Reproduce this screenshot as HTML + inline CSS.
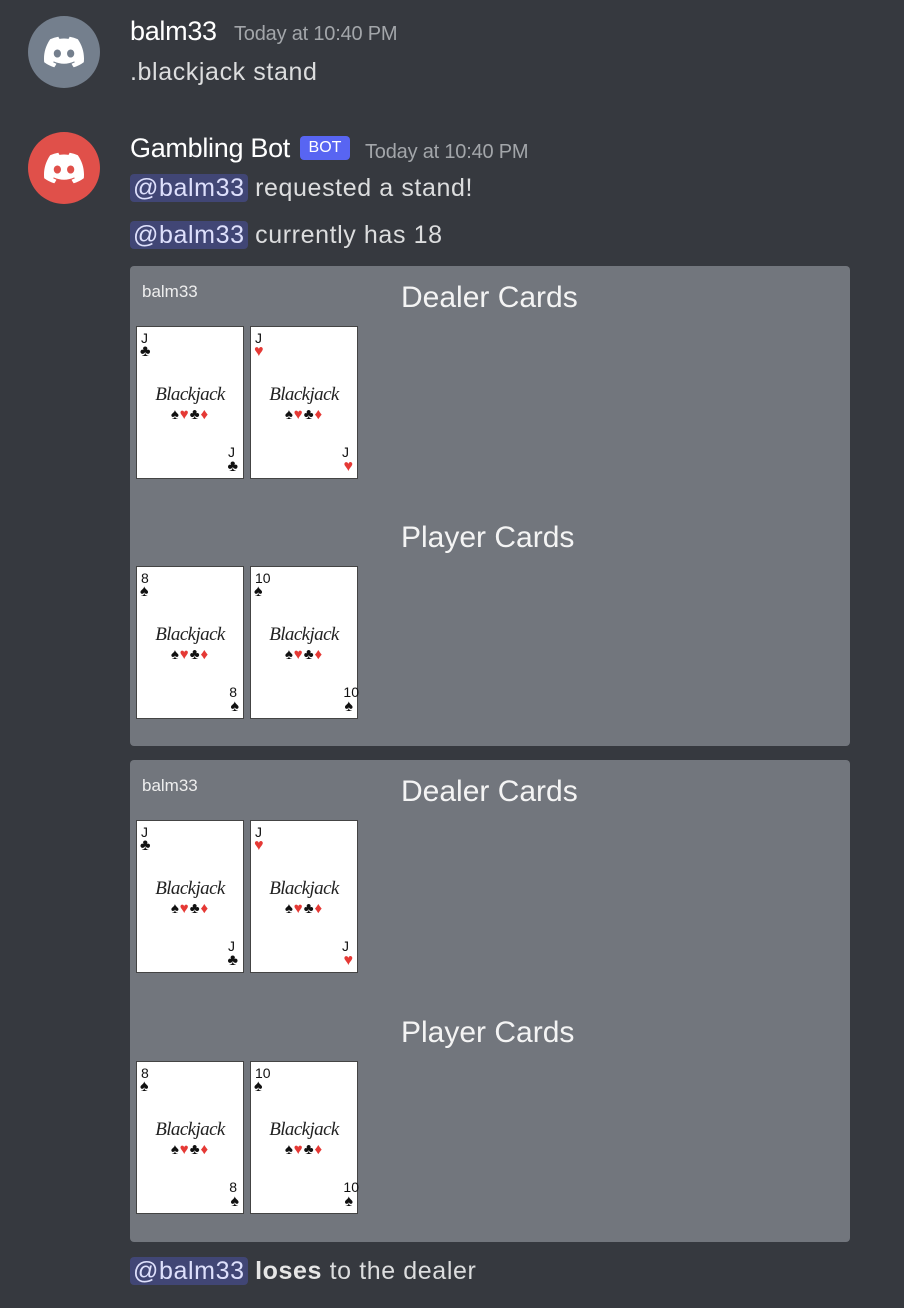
<!DOCTYPE html>
<html><head><meta charset="utf-8"><style>
*{margin:0;padding:0;box-sizing:border-box}
body{width:904px;height:1308px;background:#36393f;font-family:"Liberation Sans",sans-serif;position:relative;overflow:hidden;color:#dcddde}
.a{position:absolute}
.av{position:absolute;left:28px;width:72px;height:72px;border-radius:50%;display:flex;align-items:center;justify-content:center}
.name{font-size:27px;color:#fff;letter-spacing:-0.3px}
.ts{font-size:20px;color:#a3a6aa;letter-spacing:-0.2px}
.txt{font-size:25px;color:#dcddde;letter-spacing:0.6px}
.m{background:#414675;color:#dee0fc;border-radius:4px;padding:0 3px}
.emb{position:absolute;left:130px;width:720px;background:#72767d;border-radius:4px}
.card{position:absolute;width:108px;height:153px;background:#fff;border:1px solid #444}
.card .r{position:absolute;font-size:14px;color:#111;line-height:14px}
.card .s{position:absolute;font-size:16px;line-height:16px}
.bj{position:absolute;left:0;width:106px;top:57px;text-align:center;font-family:"Liberation Serif",serif;font-style:italic;font-size:19px;color:#222;letter-spacing:-0.6px}
.suits{position:absolute;left:0;width:106px;top:79px;text-align:center;font-size:15px;letter-spacing:1px}
.red{color:#e53935}.blk{color:#111}
.h{position:absolute;left:271px;font-size:30px;color:#f4f4f4}
.u{position:absolute;left:12px;top:16px;font-size:17px;color:#eee}
</style></head><body>

<div class="av" style="top:16px;background:#747f8d"><svg width="40" height="40" viewBox="0 0 24 24"><path fill="#fff" d="M20.317 4.37a19.791 19.791 0 0 0-4.885-1.515.074.074 0 0 0-.079.037c-.21.375-.444.864-.608 1.25a18.27 18.27 0 0 0-5.487 0 12.64 12.64 0 0 0-.617-1.25.077.077 0 0 0-.079-.037A19.736 19.736 0 0 0 3.677 4.37a.07.07 0 0 0-.032.027C.533 9.046-.32 13.58.099 18.057a.082.082 0 0 0 .031.057 19.9 19.9 0 0 0 5.993 3.03.078.078 0 0 0 .084-.028c.462-.63.874-1.295 1.226-1.994a.076.076 0 0 0-.041-.106 13.107 13.107 0 0 1-1.872-.892.077.077 0 0 1-.008-.128 10.2 10.2 0 0 0 .372-.292.074.074 0 0 1 .077-.01c3.928 1.793 8.18 1.793 12.062 0a.074.074 0 0 1 .078.01c.12.098.246.198.373.292a.077.077 0 0 1-.006.127 12.299 12.299 0 0 1-1.873.892.077.077 0 0 0-.041.107c.36.698.772 1.362 1.225 1.993a.076.076 0 0 0 .084.028 19.839 19.839 0 0 0 6.002-3.030.077.077 0 0 0 .032-.054c.5-5.177-.838-9.674-3.549-13.66a.061.061 0 0 0-.031-.03zM8.02 15.33c-1.183 0-2.157-1.085-2.157-2.419 0-1.333.956-2.419 2.157-2.419 1.21 0 2.176 1.096 2.157 2.42 0 1.333-.956 2.418-2.157 2.418zm7.975 0c-1.183 0-2.157-1.085-2.157-2.419 0-1.333.955-2.419 2.157-2.419 1.21 0 2.176 1.096 2.157 2.42 0 1.333-.946 2.418-2.157 2.418z"/></svg></div>
<div class="a name" style="left:130px;top:16px">balm33</div>
<div class="a ts" style="left:234px;top:23px">Today at 10:40 PM</div>
<div class="a txt" style="left:130px;top:58px">.blackjack stand</div>

<div class="av" style="top:132px;background:#e0504a"><svg width="40" height="40" viewBox="0 0 24 24"><path fill="#fff" d="M20.317 4.37a19.791 19.791 0 0 0-4.885-1.515.074.074 0 0 0-.079.037c-.21.375-.444.864-.608 1.25a18.27 18.27 0 0 0-5.487 0 12.64 12.64 0 0 0-.617-1.25.077.077 0 0 0-.079-.037A19.736 19.736 0 0 0 3.677 4.37a.07.07 0 0 0-.032.027C.533 9.046-.32 13.58.099 18.057a.082.082 0 0 0 .031.057 19.9 19.9 0 0 0 5.993 3.03.078.078 0 0 0 .084-.028c.462-.63.874-1.295 1.226-1.994a.076.076 0 0 0-.041-.106 13.107 13.107 0 0 1-1.872-.892.077.077 0 0 1-.008-.128 10.2 10.2 0 0 0 .372-.292.074.074 0 0 1 .077-.01c3.928 1.793 8.180 1.793 12.062 0a.074.074 0 0 1 .078.01c.12.098.246.198.373.292a.077.077 0 0 1-.006.127 12.299 12.299 0 0 1-1.873.892.077.077 0 0 0-.041.107c.36.698.772 1.362 1.225 1.993a.076.076 0 0 0 .084.028 19.839 19.839 0 0 0 6.002-3.03.077.077 0 0 0 .032-.054c.5-5.177-.838-9.674-3.549-13.66a.061.061 0 0 0-.031-.03zM8.02 15.33c-1.183 0-2.157-1.085-2.157-2.419 0-1.333.956-2.419 2.157-2.419 1.21 0 2.176 1.096 2.157 2.42 0 1.333-.956 2.418-2.157 2.418zm7.975 0c-1.183 0-2.157-1.085-2.157-2.419 0-1.333.955-2.419 2.157-2.419 1.21 0 2.176 1.096 2.157 2.42 0 1.333-.946 2.418-2.157 2.418z"/></svg></div>
<div class="a name" style="left:130px;top:133px">Gambling Bot</div>
<div class="a" style="left:300px;top:136px;width:50px;height:24px;background:#5865f2;border-radius:4px;color:#fff;font-size:16px;text-align:center;line-height:24px">BOT</div>
<div class="a ts" style="left:365px;top:141px">Today at 10:40 PM</div>
<div class="a txt" style="left:130px;top:174px"><span class="m">@balm33</span> requested a stand!</div>
<div class="a txt" style="left:130px;top:221px"><span class="m">@balm33</span> currently has 18</div>

<div class="emb" style="top:266px;height:480px">
<div class="u">balm33</div>
<div class="h" style="top:15px">Dealer Cards</div>
<div class="h" style="top:255px">Player Cards</div>
<div class="card" style="left:6px;top:60px"><div class="r" style="left:4px;top:4px">J</div><div class="s blk" style="left:3px;top:17px">♣</div><div class="bj">Blackjack</div><div class="suits"><span class="blk">♠</span><span class="red">♥</span><span class="blk">♣</span><span class="red">♦</span></div><div class="r" style="right:8px;top:118px">J</div><div class="s blk" style="right:5px;top:132px">♣</div></div>
<div class="card" style="left:120px;top:60px"><div class="r red" style="left:4px;top:4px">J</div><div class="s red" style="left:3px;top:17px">♥</div><div class="bj">Blackjack</div><div class="suits"><span class="blk">♠</span><span class="red">♥</span><span class="blk">♣</span><span class="red">♦</span></div><div class="r red" style="right:8px;top:118px">J</div><div class="s red" style="right:4px;top:132px">♥</div></div>
<div class="card" style="left:6px;top:300px"><div class="r" style="left:4px;top:4px">8</div><div class="s blk" style="left:3px;top:17px">♠</div><div class="bj">Blackjack</div><div class="suits"><span class="blk">♠</span><span class="red">♥</span><span class="blk">♣</span><span class="red">♦</span></div><div class="r" style="right:6px;top:118px">8</div><div class="s blk" style="right:4px;top:132px">♠</div></div>
<div class="card" style="left:120px;top:300px"><div class="r" style="left:4px;top:4px">10</div><div class="s blk" style="left:3px;top:17px">♠</div><div class="bj">Blackjack</div><div class="suits"><span class="blk">♠</span><span class="red">♥</span><span class="blk">♣</span><span class="red">♦</span></div><div class="r" style="right:-2px;top:118px">10</div><div class="s blk" style="right:4px;top:132px">♠</div></div>
</div>

<div class="emb" style="top:760px;height:482px">
<div class="u">balm33</div>
<div class="h" style="top:15px">Dealer Cards</div>
<div class="h" style="top:256px">Player Cards</div>
<div class="card" style="left:6px;top:60px"><div class="r" style="left:4px;top:4px">J</div><div class="s blk" style="left:3px;top:17px">♣</div><div class="bj">Blackjack</div><div class="suits"><span class="blk">♠</span><span class="red">♥</span><span class="blk">♣</span><span class="red">♦</span></div><div class="r" style="right:8px;top:118px">J</div><div class="s blk" style="right:5px;top:132px">♣</div></div>
<div class="card" style="left:120px;top:60px"><div class="r red" style="left:4px;top:4px">J</div><div class="s red" style="left:3px;top:17px">♥</div><div class="bj">Blackjack</div><div class="suits"><span class="blk">♠</span><span class="red">♥</span><span class="blk">♣</span><span class="red">♦</span></div><div class="r red" style="right:8px;top:118px">J</div><div class="s red" style="right:4px;top:132px">♥</div></div>
<div class="card" style="left:6px;top:301px"><div class="r" style="left:4px;top:4px">8</div><div class="s blk" style="left:3px;top:17px">♠</div><div class="bj">Blackjack</div><div class="suits"><span class="blk">♠</span><span class="red">♥</span><span class="blk">♣</span><span class="red">♦</span></div><div class="r" style="right:6px;top:118px">8</div><div class="s blk" style="right:4px;top:132px">♠</div></div>
<div class="card" style="left:120px;top:301px"><div class="r" style="left:4px;top:4px">10</div><div class="s blk" style="left:3px;top:17px">♠</div><div class="bj">Blackjack</div><div class="suits"><span class="blk">♠</span><span class="red">♥</span><span class="blk">♣</span><span class="red">♦</span></div><div class="r" style="right:-2px;top:118px">10</div><div class="s blk" style="right:4px;top:132px">♠</div></div>
</div>

<div class="a txt" style="left:130px;top:1257px"><span class="m">@balm33</span> <b style="color:#e6e6e6">loses</b> to the dealer</div>
</body></html>
